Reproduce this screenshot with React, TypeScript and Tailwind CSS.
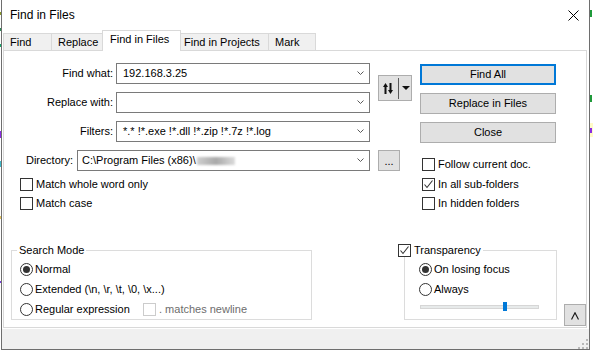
import React from "react";

type ChildProps = { children?: React.ReactNode; className?: string };

const Chevron = () => (
  <svg width="7" height="5" viewBox="0 0 7 5" className="shrink-0">
    <polyline points="0.5,0.5 3.5,3.5 6.5,0.5" fill="none" stroke="#5a5a5a" strokeWidth="1" />
  </svg>
);

const Combo = ({ value, className = "", tight = false, children }: { value: string; tight?: boolean } & ChildProps) => (
  <div
    className={`h-[21px] border border-[#7a7a7a] bg-white flex items-center justify-between pr-[5px] ${
      tight ? "pl-[4px]" : "pl-[6px]"
    } ${className}`}
  >
    <span className="flex items-center whitespace-nowrap">
      {value}
      {children}
    </span>
    <Chevron />
  </div>
);

const Check = () => (
  <svg width="11" height="11" viewBox="0 0 11 11">
    <polyline points="1.5,5.5 4,8.5 9.5,1.5" fill="none" stroke="#333333" strokeWidth="1.1" />
  </svg>
);

const CheckBox = ({ label, checked = false, disabled = false }: { label: string; checked?: boolean; disabled?: boolean }) => (
  <div className="flex items-center h-[13px]">
    <span
      className={`w-[13px] h-[13px] shrink-0 border bg-white flex items-center justify-center ${
        disabled ? "border-[#cccccc]" : "border-[#333333]"
      }`}
    >
      {checked && <Check />}
    </span>
    <span className={`ml-[3px] whitespace-nowrap ${disabled ? "text-[#6d6d6d]" : "text-black"}`}>{label}</span>
  </div>
);

const Radio = ({ label, checked = false, className = "" }: { label: string; checked?: boolean; className?: string }) => (
  <div className={`flex items-center h-[13px] ${className}`}>
    <span className="w-[13px] h-[13px] shrink-0 rounded-full border border-[#333333] bg-white flex items-center justify-center">
      {checked && <span className="w-[7px] h-[7px] rounded-full bg-[#333333]" />}
    </span>
    <span className="ml-[2px] whitespace-nowrap">{label}</span>
  </div>
);

const Btn = ({ children, primary = false, className = "" }: { primary?: boolean } & ChildProps) => (
  <div
    className={`h-[21px] flex items-center justify-center bg-[#e1e1e1] ${
      primary ? "border-2 border-[#0078d7]" : "border border-[#adadad]"
    } ${className}`}
  >
    {children}
  </div>
);

const Tab = ({ children, className = "" }: ChildProps) => (
  <div className={`h-[17px] border border-b-0 border-[#d9d9d9] bg-[#f0f0f0] flex items-center whitespace-nowrap ${className}`}>
    {children}
  </div>
);

const SwapIcon = () => (
  <svg width="10" height="11" viewBox="0 0 10 11">
    <polygon points="0,4 2.5,0 5,4" fill="#111" />
    <rect x="1.5" y="3" width="2" height="8" fill="#111" />
    <rect x="6.5" y="0" width="2" height="8" fill="#111" />
    <polygon points="5,7 7.5,11 10,7" fill="#111" />
  </svg>
);

const Grip = () => (
  <svg width="10" height="10" viewBox="0 0 10 10">
    <rect x="8" y="0" width="2" height="2" fill="#b8b8b8" />
    <rect x="4" y="4" width="2" height="2" fill="#b8b8b8" />
    <rect x="8" y="4" width="2" height="2" fill="#b8b8b8" />
    <rect x="0" y="8" width="2" height="2" fill="#b8b8b8" />
    <rect x="4" y="8" width="2" height="2" fill="#b8b8b8" />
    <rect x="8" y="8" width="2" height="2" fill="#b8b8b8" />
  </svg>
);

export default function App() {
  return (
    <div className="w-[593px] h-[351px] bg-white flex font-['Liberation_Sans',Arial,sans-serif] text-[11px] leading-[13px] text-black overflow-hidden">
      {/* editor behind, left edge */}
      <div className="w-[1px] flex flex-col">
        <div className="mt-[12px] h-[3px] bg-[#8a9a2a]" />
        <div className="mt-[13px] h-[3px] bg-[#2e8b57]" />
        <div className="mt-[13px] h-[3px] bg-[#1aa36a]" />
        <div className="mt-[84px] h-[7px] bg-[#8a2be2]" />
        <div className="mt-[23px] h-[6px] bg-[#3fb8c8]" />
        <div className="mt-[49px] h-[3px] bg-[#e0c060]" />
        <div className="mt-[62px] h-[2px] bg-[#7b3fe0]" />
      </div>

      <div className="w-[589px] h-[350px] border-l border-r border-b border-[#6e6e6e] flex flex-col">
        {/* title bar */}
        <div className="h-[30px] shrink-0 flex items-center justify-between pl-[8px] pr-[10px] text-[12px]">
          <span>Find in Files</span>
          <svg width="11" height="11" viewBox="0 0 11 11">
            <path d="M0.5 0.5 L10.5 10.5 M10.5 0.5 L0.5 10.5" stroke="#000" strokeWidth="1" />
          </svg>
        </div>

        {/* tabs */}
        <div className="h-[20px] shrink-0 ml-[1px] flex items-end">
          <Tab className="w-[49px] pl-[6px]">Find</Tab>
          <Tab className="-ml-px w-[52px] pl-[6px]">Replace</Tab>
          <div className="-ml-px relative z-10 mb-[-1px] w-[79px] h-[21px] border border-b-0 border-[#d9d9d9] bg-white flex items-center pl-[7px] pb-[3px] whitespace-nowrap">
            Find in Files
          </div>
          <Tab className="-ml-px w-[89px] pl-[3px]">Find in Projects</Tab>
          <Tab className="-ml-px w-[48px] pl-[6px]">Mark</Tab>
        </div>

        {/* panel */}
        <div className="ml-[1px] w-[584px] h-[278px] shrink-0 border border-[#d9d9d9] bg-white flex flex-col">
          <div className="flex pt-[12px]">
            <div className="w-[408px]">
              <div className="grid grid-cols-[109px_254px_39px] grid-rows-[21px_21px_21px] gap-x-[3px] gap-y-[8px]">
                <span className="col-start-1 row-start-1 self-center text-right">Find what:</span>
                <Combo className="col-start-2 row-start-1" value="192.168.3.25" />
                <div className="col-start-3 row-start-1 row-span-2 self-center justify-self-end w-[34px] h-[26px] border border-[#adadad] bg-[#e1e1e1] flex items-center pl-[4px]">
                  <SwapIcon />
                  <span className="ml-[5px] w-px h-[21px] bg-[#5a5a5a]" />
                  <svg width="8" height="4" viewBox="0 0 8 4" className="ml-[3px]">
                    <polygon points="0,0 8,0 4,4" fill="#111" />
                  </svg>
                </div>
                <span className="col-start-1 row-start-2 self-center text-right">Replace with:</span>
                <Combo className="col-start-2 row-start-2" value="" />
                <span className="col-start-1 row-start-3 self-center text-right">Filters:</span>
                <Combo className="col-start-2 row-start-3" value="*.* !*.exe !*.dll !*.zip !*.7z !*.log" />
              </div>

              <div className="mt-[8px] flex items-center h-[21px]">
                <span className="w-[69px] text-right">Directory:</span>
                <Combo className="ml-[4px] w-[293px]" tight value={"C:\\Program Files (x86)\\"}>
                  <span className="ml-[1px] w-[38px] h-[8px] bg-gradient-to-r from-[#cfcfcf] via-[#a9a9a9] to-[#dcdcdc] blur-[1px]" />
                </Combo>
                <div className="ml-[8px] w-[22px] h-[21px] border border-[#adadad] bg-[#e1e1e1] flex items-center justify-center pt-[1px]">
                  ...
                </div>
              </div>

              <div className="mt-[7px] ml-[16px] flex flex-col gap-[6px]">
                <CheckBox label="Match whole word only" />
                <CheckBox label="Match case" />
              </div>
            </div>

            <div className="ml-[8px] w-[136px] pt-[1px] flex flex-col">
              <Btn primary>Find All</Btn>
              <Btn className="mt-[8px]">Replace in Files</Btn>
              <Btn className="mt-[8px]">Close</Btn>
              <div className="mt-[15px] ml-[2px] flex flex-col">
                <CheckBox label="Follow current doc." />
                <div className="mt-[7px]">
                  <CheckBox checked label="In all sub-folders" />
                </div>
                <div className="mt-[6px]">
                  <CheckBox label="In hidden folders" />
                </div>
              </div>
            </div>
          </div>

          {/* bottom groups */}
          <div className="mt-auto flex items-end pb-[1px]">
            <div className="relative ml-[7px] mb-[6px] w-[301px] h-[70px] border border-[#dcdcdc] pt-[12px] pl-[8px] flex flex-col">
              <span className="absolute left-[5px] top-[-7px] bg-white px-[2px]">Search Mode</span>
              <Radio checked label="Normal" />
              <Radio className="mt-[7px]" label={"Extended (\\n, \\r, \\t, \\0, \\x...)"} />
              <div className="mt-[7px] flex items-center">
                <div className="w-[123px]">
                  <Radio label="Regular expression" />
                </div>
                <CheckBox disabled label=". matches newline" />
              </div>
            </div>

            <div className="relative ml-[92px] mb-[6px] w-[153px] h-[70px] border border-[#dcdcdc] pt-[12px] pl-[14px] flex flex-col">
              <div className="absolute left-[-7px] top-[-7px] bg-white pr-[2px]">
                <CheckBox checked label="Transparency" />
              </div>
              <Radio checked label="On losing focus" />
              <Radio className="mt-[7px]" label="Always" />
              <div className="relative mt-[6px] ml-[1px] w-[119px] h-[9px]">
                <div className="mt-[3px] h-[4px] bg-[#e7eaea] border border-[#d6d6d6]" />
                <div className="absolute left-[83px] top-0 w-[4px] h-[9px] bg-[#0078d7]" />
              </div>
            </div>

            <div className="ml-[7px] w-[22px] h-[22px] border border-[#adadad] bg-[#e1e1e1] flex items-center justify-center pt-[2px]">
              <svg width="8" height="8" viewBox="0 0 8 8">
                <polyline points="0.5,7.5 4,0.8 7.5,7.5" fill="none" stroke="#1a1a1a" strokeWidth="1.2" />
              </svg>
            </div>
          </div>
        </div>

        <div className="h-[1px] shrink-0" />
        <div className="h-[20px] shrink-0 bg-[#f0f0f0] flex justify-end items-end pr-[1px]">
          <Grip />
        </div>
      </div>

      {/* editor behind, right edge */}
      <div className="w-[3px] flex flex-col">
        <div className="mt-[10px] h-[7px] w-[2px] bg-[#1f9a3a]" />
        <div className="mt-[78px] h-[7px] w-[2px] bg-[#1f9a3a]" />
        <div className="mt-[21px] h-[14px] bg-[#fffbc8] flex items-center">
          <div className="h-[5px] w-[2px] bg-[#8a2be2]" />
        </div>
      </div>
    </div>
  );
}
